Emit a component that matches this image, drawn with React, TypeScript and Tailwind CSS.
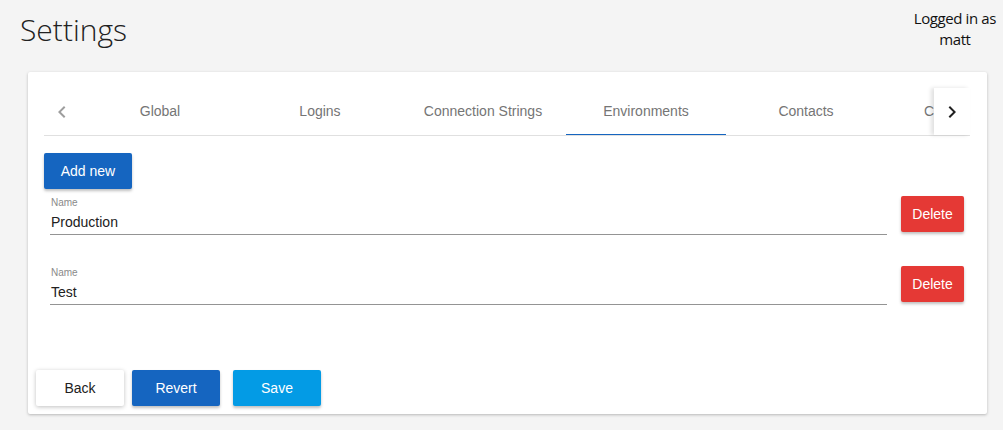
const tabs = [
  { label: "Global", cls: "w-[160px]" },
  { label: "Logins", cls: "w-[160px]" },
  { label: "Connection Strings", cls: "w-[166px]" },
  { label: "Environments", cls: "w-[160px] border-b-[2px] border-[#1565c0] mb-[-1px]" },
  { label: "Contacts", cls: "w-[160px]" },
  { label: "Chat Settings", cls: "w-[160px]" },
];

function ChevronLeft() {
  return (
    <svg width="24" height="24" viewBox="0 0 24 24" className="fill-current">
      <path d="M15.41 7.41L14 6l-6 6 6 6 1.41-1.41L10.83 12z" />
    </svg>
  );
}

function ChevronRight() {
  return (
    <svg width="24" height="24" viewBox="0 0 24 24" className="fill-current">
      <path d="M10 6L8.59 7.41 13.17 12l-4.58 4.59L10 18l6-6z" />
    </svg>
  );
}

function EnvRow({ value }: { value: string }) {
  return (
    <div className="flex items-start h-[70px]">
      <div className="flex-1 ml-[6px] pl-[1px] flex flex-col border-b border-[#949494] h-[39px]">
        <label className="text-[10px] leading-[12px] text-[#8a8a8a] mt-[1px]">Name</label>
        <span className="text-[14px] leading-[16px] text-[#212121] mt-[5px]">{value}</span>
      </div>
      <button className="ml-[14px] mr-[6px] w-[63px] h-[36px] rounded-[2px] bg-[#e53935] text-white text-[14px] shadow-[0_2px_3px_rgba(0,0,0,0.25)]">
        Delete
      </button>
    </div>
  );
}

export default function App() {
  return (
    <div className="min-h-[430px] bg-[#f4f4f4] font-['Liberation_Sans',Arial,sans-serif]">
      <header className="flex justify-between items-start h-[72px] pl-[20px] pr-[7px]">
        <h1 className="font-['Open_Sans',sans-serif] font-light text-[30px] leading-[40px] mt-[10px] text-[#212121]">
          Settings
        </h1>
        <div className="font-['Open_Sans',sans-serif] text-[15px] leading-[21px] text-center text-[#111] mt-[8px] tracking-[-0.4px]">
          Logged in as
          <br />
          matt
        </div>
      </header>

      <div className="ml-[28px] mr-[16px] h-[342px] bg-white rounded-[2px] shadow-[0_1px_3px_rgba(0,0,0,0.25)] flex flex-col pt-[16px] pb-[8px]">
        <div className="mx-[16px] mr-[17px] flex h-[48px] border-b border-[#e0e0e0]">
          <button className="w-[36px] flex items-center justify-center text-[#9e9e9e]">
            <ChevronLeft />
          </button>
          <div className="flex-1 flex overflow-hidden">
            {tabs.map((t) => (
              <div
                key={t.label}
                className={`${t.cls} shrink-0 flex items-center justify-center text-[14px] text-[#757575] whitespace-nowrap`}
              >
                {t.label}
              </div>
            ))}
          </div>
          <button className="w-[36px] flex items-center justify-center text-[#212121] bg-white shadow-[-3px_0_4px_rgba(0,0,0,0.12)] relative">
            <ChevronRight />
          </button>
        </div>

        <div className="px-[16px] pr-[17px] pt-[17px]">
          <button className="w-[88px] h-[36px] rounded-[2px] bg-[#1565c0] text-white text-[14px] shadow-[0_2px_3px_rgba(0,0,0,0.25)]">
            Add new
          </button>
          <div className="mt-[7px]">
            <EnvRow value="Production" />
            <EnvRow value="Test" />
          </div>
        </div>

        <div className="mt-auto flex px-[8px] gap-[8px]">
          <button className="w-[88px] h-[36px] rounded-[2px] bg-white text-[#212121] text-[14px] shadow-[0_1px_4px_rgba(0,0,0,0.25)]">
            Back
          </button>
          <button className="w-[88px] h-[36px] rounded-[2px] bg-[#1565c0] text-white text-[14px] shadow-[0_2px_3px_rgba(0,0,0,0.25)]">
            Revert
          </button>
          <button className="ml-[5px] w-[88px] h-[36px] rounded-[2px] bg-[#039be5] text-white text-[14px] shadow-[0_2px_3px_rgba(0,0,0,0.25)]">
            Save
          </button>
        </div>
      </div>
    </div>
  );
}
